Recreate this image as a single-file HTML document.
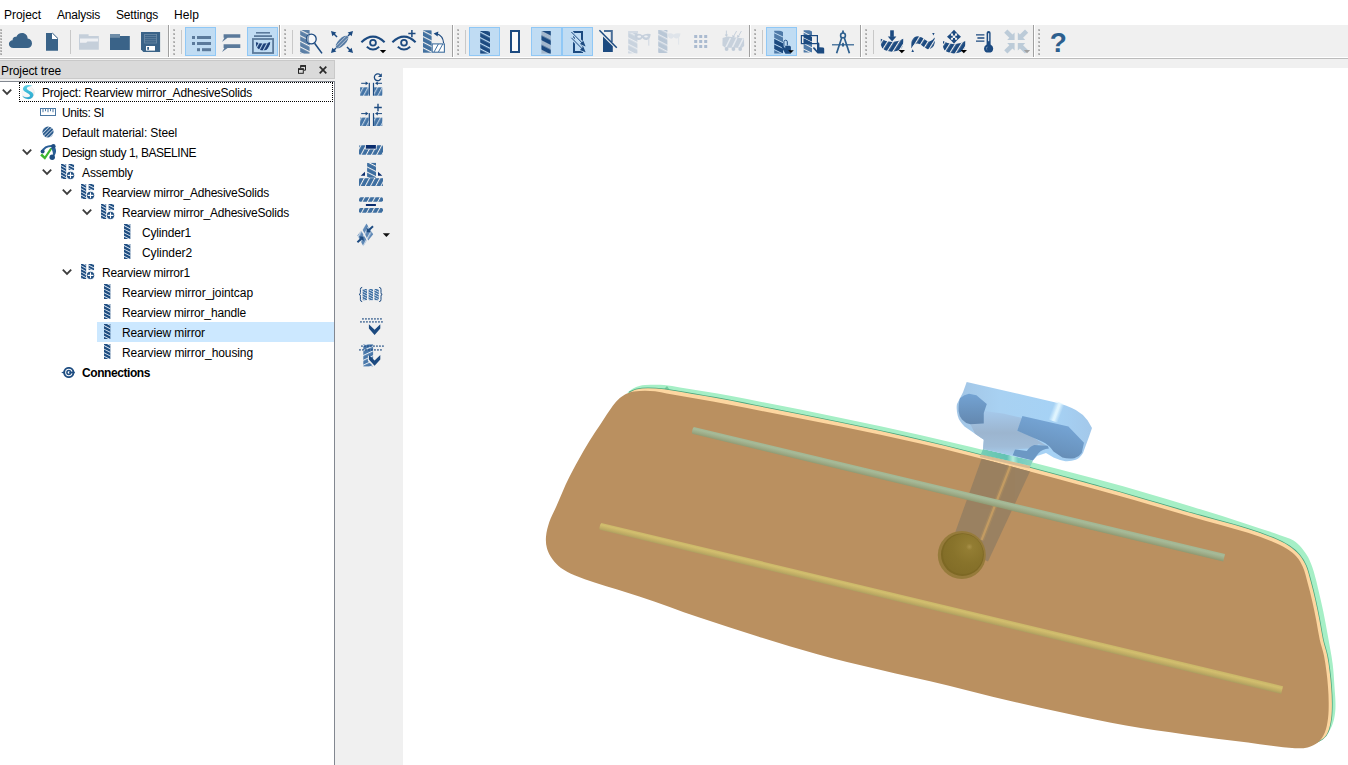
<!DOCTYPE html>
<html><head><meta charset="utf-8"><title>Project</title>
<style>
*{box-sizing:border-box;margin:0;padding:0}
html,body{width:1348px;height:765px;overflow:hidden;background:#f0f0f0;font-family:"Liberation Sans",sans-serif;font-size:12px;color:#000}
#app{position:relative;width:1348px;height:765px;overflow:hidden;background:#f0f0f0}
.abs{position:absolute}
#menubar{position:absolute;left:0;top:0;width:1348px;height:25px;background:#fff}
#menubar span{position:absolute;top:8px;line-height:14px;font-size:12px;white-space:nowrap}
#toolbar{position:absolute;left:0;top:25px;width:1348px;height:33px;background:#f0f0f0}
#tbline1{position:absolute;left:0;top:58px;width:1348px;height:1px;background:#bcbcbc}
#tbline0{position:absolute;left:0;top:57px;width:1348px;height:1px;background:#fff}
#docktitle{position:absolute;left:0;top:60px;width:335px;height:19px;background:#dadada;border:1px solid #c9c9c9;border-left:none}
#docktitle span{position:absolute;left:1px;top:3px;line-height:14px;white-space:nowrap}
#tree{position:absolute;left:0;top:81px;width:335px;height:684px;background:#fff;border-right:1px solid #828790}
.row{position:absolute;height:20px;line-height:22px;white-space:nowrap}
#sel{position:absolute;left:97px;top:241px;width:237px;height:20px;background:#cce8ff}
#focus{position:absolute;left:19px;top:1px;width:314px;height:20px;border:1px dotted #000}
#vtb{position:absolute;left:336px;top:59px;width:67px;height:706px;background:#f0f0f0}
#view{position:absolute;left:403px;top:68px;width:945px;height:697px;background:#fff}
</style></head><body><div id="app">
<div id="menubar"><span style="left:4px;letter-spacing:-0.051px">Project</span><span style="left:57px;letter-spacing:-0.211px">Analysis</span><span style="left:116px;letter-spacing:-0.170px">Settings</span><span style="left:174px;letter-spacing:0.077px">Help</span></div>
<div id="toolbar"><svg class="abs" style="left:0;top:0" width="1348" height="33" viewBox="0 25 1348 33">
<defs>
<pattern id="hA" width="5" height="5" patternUnits="userSpaceOnUse" patternTransform="rotate(27)"><rect width="5" height="5" fill="#41709f"/><rect width="5" height="1.1" fill="#f0f0f0"/></pattern>
<pattern id="hAs" width="5" height="5" patternUnits="userSpaceOnUse" patternTransform="rotate(27)"><rect width="5" height="5" fill="#5b7fa6"/><rect width="5" height="1.1" fill="#f0f0f0"/></pattern>
<pattern id="hAd" width="5" height="5" patternUnits="userSpaceOnUse" patternTransform="rotate(27)"><rect width="5" height="5" fill="#1c4a80"/><rect width="5" height="1.2" fill="#c0dcf3"/></pattern>
<pattern id="hAm" width="8.4" height="8.4" patternUnits="userSpaceOnUse" patternTransform="rotate(27)"><rect width="8.4" height="8.4" fill="#1c4a80"/><rect width="8.4" height="4.2" fill="#a3b7cc"/></pattern>
<pattern id="hAx" width="5.6" height="5.6" patternUnits="userSpaceOnUse" patternTransform="rotate(27)"><rect width="5.6" height="5.6" fill="#c9d3de"/><rect width="5.6" height="1.3" fill="#e9ecf0"/></pattern>
<pattern id="hAy" width="5.6" height="5.6" patternUnits="userSpaceOnUse" patternTransform="rotate(27)"><rect width="5.6" height="5.6" fill="#b9c7d6"/><rect width="5.6" height="1.3" fill="#e4e8ee"/></pattern>
<pattern id="hB" width="4.9" height="4.9" patternUnits="userSpaceOnUse" patternTransform="rotate(-58)"><rect width="4.9" height="4.9" fill="#1c4a80"/><rect width="4.9" height="1.15" fill="#f0f0f0"/></pattern>
<pattern id="hBl" width="3.6" height="3.6" patternUnits="userSpaceOnUse" patternTransform="rotate(-62)"><rect width="3.6" height="3.6" fill="#1c3f78"/><rect width="3.6" height="1.0" fill="#c0dcf3"/></pattern>
<pattern id="hC" width="3.2" height="3.2" patternUnits="userSpaceOnUse" patternTransform="rotate(-58)"><rect width="3.2" height="3.2" fill="#5b7a9b"/><rect width="3.2" height="0.9" fill="#f0f0f0"/></pattern>
<pattern id="hAm2" width="9" height="9" patternUnits="userSpaceOnUse" patternTransform="rotate(27)"><rect width="9" height="9" fill="#1c4a80"/><rect width="9" height="3.6" fill="#4a76a6"/><rect y="3.6" width="9" height="1" fill="#c0dcf3"/><rect y="8" width="9" height="1" fill="#c0dcf3"/></pattern>
<pattern id="hAm3" width="9" height="9" patternUnits="userSpaceOnUse" patternTransform="rotate(27)"><rect width="9" height="9" fill="#1c4a80"/><rect width="9" height="3.6" fill="#4a76a6"/><rect y="3.6" width="9" height="1" fill="#f0f0f0"/><rect y="8" width="9" height="1" fill="#f0f0f0"/></pattern>
</defs>
<rect x="0" y="29" width="2" height="2" fill="#bcbcbc"/><rect x="1" y="30" width="1" height="1" fill="#a4a4a4"/><rect x="0" y="32" width="2" height="2" fill="#bcbcbc"/><rect x="1" y="33" width="1" height="1" fill="#a4a4a4"/><rect x="0" y="35" width="2" height="2" fill="#bcbcbc"/><rect x="1" y="36" width="1" height="1" fill="#a4a4a4"/><rect x="0" y="38" width="2" height="2" fill="#bcbcbc"/><rect x="1" y="39" width="1" height="1" fill="#a4a4a4"/><rect x="0" y="41" width="2" height="2" fill="#bcbcbc"/><rect x="1" y="42" width="1" height="1" fill="#a4a4a4"/><rect x="0" y="44" width="2" height="2" fill="#bcbcbc"/><rect x="1" y="45" width="1" height="1" fill="#a4a4a4"/><rect x="0" y="47" width="2" height="2" fill="#bcbcbc"/><rect x="1" y="48" width="1" height="1" fill="#a4a4a4"/><rect x="0" y="50" width="2" height="2" fill="#bcbcbc"/><rect x="1" y="51" width="1" height="1" fill="#a4a4a4"/><rect x="0" y="53" width="2" height="2" fill="#bcbcbc"/><rect x="1" y="54" width="1" height="1" fill="#a4a4a4"/>
<path d="M13.5 48 C10.6 48 8.9 46.2 8.9 44 C8.9 41.8 10.6 40.4 12.6 40.2 C12.4 37.6 14.4 36.2 16.4 36.8 C17.2 34.4 19.4 32.9 22 32.9 C25.4 32.9 27.8 35.6 27.6 38.6 C30.2 38.8 32 40.8 32 43.4 C32 46 30 48 27.4 48 Z" fill="#3a6388"/>
<path d="M46 33 H52.4 L58 38.6 V50.7 H46 Z" fill="#3a6388"/><path d="M52 33 L58 39 H52 Z" fill="#ffffff"/><path d="M52.4 33 L58 38.6" stroke="#3a6388" stroke-width="0.8"/>
<rect x="70" y="30" width="1" height="24" fill="#c8c8c8"/>
<path d="M79 34.2 H88.6 V36 H98.8 V49.8 H79 Z" fill="#c5cfda"/><path d="M80 38.6 H98 V41.4 H87.4 L86.2 42.8 H80 Z" fill="#eef0f3"/>
<path d="M110 36 H129.8 V50 H110 Z" fill="#3a6388"/><path d="M110 34 H120 V37.8 H110 Z" fill="#6f8da8"/>
<path d="M141 32 H160.1 V52 H143.4 L141 49.6 Z" fill="#3a6388"/><rect x="144.6" y="34.4" width="12" height="8.6" fill="none" stroke="#6f8da8" stroke-width="0.8"/><path d="M144.6 36.6 H156.6 M144.6 38.7 H156.6 M144.6 40.8 H156.6" stroke="#6f8da8" stroke-width="0.7"/><rect x="146" y="46" width="9" height="4.6" fill="#fff"/><rect x="147.2" y="47" width="1.8" height="2.8" fill="#3a6388"/>
<rect x="168" y="25" width="1" height="33" fill="#a0a0a0"/><rect x="169" y="25" width="1" height="33" fill="#ffffff"/>
<rect x="173" y="29" width="2" height="2" fill="#bcbcbc"/><rect x="174" y="30" width="1" height="1" fill="#a4a4a4"/><rect x="173" y="33" width="2" height="2" fill="#bcbcbc"/><rect x="174" y="34" width="1" height="1" fill="#a4a4a4"/><rect x="173" y="37" width="2" height="2" fill="#bcbcbc"/><rect x="174" y="38" width="1" height="1" fill="#a4a4a4"/><rect x="173" y="41" width="2" height="2" fill="#bcbcbc"/><rect x="174" y="42" width="1" height="1" fill="#a4a4a4"/><rect x="173" y="45" width="2" height="2" fill="#bcbcbc"/><rect x="174" y="46" width="1" height="1" fill="#a4a4a4"/><rect x="173" y="49" width="2" height="2" fill="#bcbcbc"/><rect x="174" y="50" width="1" height="1" fill="#a4a4a4"/><rect x="173" y="53" width="2" height="2" fill="#bcbcbc"/><rect x="174" y="54" width="1" height="1" fill="#a4a4a4"/>
<rect x="181" y="30" width="1" height="24" fill="#c8c8c8"/>
<rect x="185.5" y="27.5" width="30" height="28" fill="#c0dcf3" stroke="#90c8f6" stroke-width="1"/>
<rect x="192" y="36" width="3" height="3" fill="#5b7a9b"/><rect x="197" y="36" width="14" height="3" fill="#5b7a9b"/>
<rect x="192" y="42" width="3" height="3" fill="#5b7a9b"/><rect x="197" y="42" width="14" height="3" fill="#5b7a9b"/>
<rect x="197" y="48.2" width="3" height="3" fill="#5b7a9b"/><rect x="202" y="48.2" width="9" height="3" fill="#5b7a9b"/>
<path d="M223.6 34.2 H240.3 V37.800000000000004 H227.6 L222 42.0 L224.4 37.800000000000004 H223.6 Z" fill="#5b7a9b"/>
<path d="M223.6 44.3 H240.3 V47.9 H227.6 L222 52.099999999999994 L224.4 47.9 H223.6 Z" fill="#5b7a9b"/>
<rect x="247.5" y="27.5" width="30" height="28" fill="#c0dcf3" stroke="#90c8f6" stroke-width="1"/>
<rect x="256" y="32" width="14" height="1.6" fill="#5b7a9b"/><rect x="254" y="35.2" width="18" height="1.8" fill="#5b7a9b"/><rect x="252.9" y="39" width="20.2" height="14" fill="none" stroke="#5b7a9b" stroke-width="1.8"/><path d="M255.8 42 Q263 45 270.2 42 Q270.4 50.4 263 50.6 Q255.6 50.4 255.8 42 Z" fill="url(#hBl)"/>
<rect x="279" y="25" width="1" height="33" fill="#a0a0a0"/><rect x="280" y="25" width="1" height="33" fill="#ffffff"/>
<rect x="284" y="29" width="2" height="2" fill="#bcbcbc"/><rect x="285" y="30" width="1" height="1" fill="#a4a4a4"/><rect x="284" y="33" width="2" height="2" fill="#bcbcbc"/><rect x="285" y="34" width="1" height="1" fill="#a4a4a4"/><rect x="284" y="37" width="2" height="2" fill="#bcbcbc"/><rect x="285" y="38" width="1" height="1" fill="#a4a4a4"/><rect x="284" y="41" width="2" height="2" fill="#bcbcbc"/><rect x="285" y="42" width="1" height="1" fill="#a4a4a4"/><rect x="284" y="45" width="2" height="2" fill="#bcbcbc"/><rect x="285" y="46" width="1" height="1" fill="#a4a4a4"/><rect x="284" y="49" width="2" height="2" fill="#bcbcbc"/><rect x="285" y="50" width="1" height="1" fill="#a4a4a4"/><rect x="284" y="53" width="2" height="2" fill="#bcbcbc"/><rect x="285" y="54" width="1" height="1" fill="#a4a4a4"/>
<rect x="292" y="30" width="1" height="24" fill="#c8c8c8"/>
<rect x="300.2" y="30" width="9.4" height="23.6" fill="url(#hAs)"/><circle cx="311.3" cy="39" r="4.9" fill="#f6f7f9" stroke="#1c4a80" stroke-width="1.3"/><path d="M309.6 34.8 A4.5 4.5 0 0 0 309.6 43.2 A12 12 0 0 1 309.6 34.8 Z" fill="#8aa1bb"/><path d="M314.6 43.2 L322 53.4" stroke="#1c4a80" stroke-width="1.6"/>
<g transform="translate(342,42)"><g transform="rotate(-45)"><ellipse cx="0" cy="0" rx="8.2" ry="3.6" fill="#587da6"/><path d="M-6.6 -1.25 H6.6 M-6.6 1.25 H6.6" stroke="#f0f0f0" stroke-width="0.6"/></g>
<g transform="rotate(45)"><path d="M7 0 H13" stroke="#1c4a80" stroke-width="1.5"/><path d="M15.6 0 L10.8 -2.8 V2.8 Z" fill="#1c4a80"/></g>
<g transform="rotate(135)"><path d="M8.4 0 H13" stroke="#1c4a80" stroke-width="1.5"/><path d="M15.6 0 L10.8 -2.8 V2.8 Z" fill="#1c4a80"/></g>
<g transform="rotate(225)"><path d="M7 0 H13" stroke="#1c4a80" stroke-width="1.5"/><path d="M15.6 0 L10.8 -2.8 V2.8 Z" fill="#1c4a80"/></g>
<g transform="rotate(315)"><path d="M8.4 0 H13" stroke="#1c4a80" stroke-width="1.5"/><path d="M15.6 0 L10.8 -2.8 V2.8 Z" fill="#1c4a80"/></g>
</g>
<path d="M361.4 42.2 Q373 31 384.6 42.2" fill="none" stroke="#1c4a80" stroke-width="2.1"/><circle cx="373" cy="42.8" r="2.9" fill="none" stroke="#1c4a80" stroke-width="1.8"/><path d="M366.8 46.8 Q373 52.4 379.2 46.8" fill="none" stroke="#1c4a80" stroke-width="1.9"/>
<path d="M379.8 50 H386.2 L383 53.2 Z" fill="#000"/>
<path d="M392.4 42.2 Q404 31 415.6 42.2" fill="none" stroke="#1c4a80" stroke-width="2.1"/><circle cx="404" cy="42.8" r="2.9" fill="none" stroke="#1c4a80" stroke-width="1.8"/><path d="M397.8 46.8 Q404 52.4 410.2 46.8" fill="none" stroke="#1c4a80" stroke-width="1.9"/>
<path d="M408.3 33.6 H415.5 M411.9 30 V37.2" stroke="#1c4a80" stroke-width="1.5"/>
<rect x="423" y="30.3" width="8.6" height="22.4" fill="url(#hA)"/><rect x="432.2" y="43.9" width="12.2" height="8.3" fill="#fff" stroke="#41709f" stroke-width="1.1"/><path d="M434 52 L438.4 44 M438.4 52 L442.8 44" stroke="#41709f" stroke-width="1"/><path d="M443.6 43 Q443 35.6 436.6 33.8" fill="none" stroke="#1c4a80" stroke-width="1.1"/><path d="M433.6 33.4 L438.4 31.4 L437.6 36.4 Z" fill="#1c4a80"/>
<rect x="452" y="25" width="1" height="33" fill="#a0a0a0"/><rect x="453" y="25" width="1" height="33" fill="#ffffff"/>
<rect x="457" y="29" width="2" height="2" fill="#bcbcbc"/><rect x="458" y="30" width="1" height="1" fill="#a4a4a4"/><rect x="457" y="33" width="2" height="2" fill="#bcbcbc"/><rect x="458" y="34" width="1" height="1" fill="#a4a4a4"/><rect x="457" y="37" width="2" height="2" fill="#bcbcbc"/><rect x="458" y="38" width="1" height="1" fill="#a4a4a4"/><rect x="457" y="41" width="2" height="2" fill="#bcbcbc"/><rect x="458" y="42" width="1" height="1" fill="#a4a4a4"/><rect x="457" y="45" width="2" height="2" fill="#bcbcbc"/><rect x="458" y="46" width="1" height="1" fill="#a4a4a4"/><rect x="457" y="49" width="2" height="2" fill="#bcbcbc"/><rect x="458" y="50" width="1" height="1" fill="#a4a4a4"/><rect x="457" y="53" width="2" height="2" fill="#bcbcbc"/><rect x="458" y="54" width="1" height="1" fill="#a4a4a4"/>
<rect x="465" y="30" width="1" height="24" fill="#c8c8c8"/>
<rect x="469.5" y="27.5" width="30" height="28" fill="#c0dcf3" stroke="#90c8f6" stroke-width="1"/>
<rect x="480.2" y="31" width="9.8" height="22.6" fill="url(#hAd)"/>
<rect x="511" y="31" width="8" height="21" fill="#fbfbfb" stroke="#1c4a80" stroke-width="2"/>
<rect x="531.5" y="27.5" width="30" height="28" fill="#c0dcf3" stroke="#90c8f6" stroke-width="1"/>
<rect x="541.4" y="31" width="9.4" height="22.6" fill="url(#hAm)"/>
<rect x="562.5" y="27.5" width="30" height="28" fill="#c0dcf3" stroke="#90c8f6" stroke-width="1"/>
<rect x="574" y="32" width="8" height="20" fill="none" stroke="#1c4a80" stroke-width="2"/>
<path d="M571.4 32 L584.6 45.4" stroke="#c0dcf3" stroke-width="3.2"/><path d="M586.6 47.4 L578.8 44.6 L583.8 39.6 Z" fill="#c0dcf3"/>
<path d="M571.4 37.8 L584.6 51.199999999999996" stroke="#c0dcf3" stroke-width="3.2"/><path d="M586.6 53.199999999999996 L578.8 50.4 L583.8 45.4 Z" fill="#c0dcf3"/>
<path d="M571.4 32 L583 43.8" stroke="#1c4a80" stroke-width="1"/><path d="M585.6 46.4 L579.9 44.1 L583.3 40.7 Z" fill="#1c4a80"/>
<path d="M571.4 37.8 L583 49.599999999999994" stroke="#1c4a80" stroke-width="1"/><path d="M585.6 52.199999999999996 L579.9 49.9 L583.3 46.5 Z" fill="#1c4a80"/>
<path d="M604 31 H611.8 V42" fill="none" stroke="#4a6e98" stroke-width="2"/><path d="M603 36.4 L612.8 46.2 V51.9 H603 Z" fill="#1c4a80"/><path d="M599.4 30.2 L616.8 47.8" stroke="#1c4a80" stroke-width="1.5"/>
<rect x="628.2" y="31" width="9.2" height="22.4" fill="url(#hAx)"/><path d="M628.2 31 H638 V33 H628.2 Z" fill="#d4dbe4"/>
<path d="M634.6 34.4 Q639 33 642.4 35.2 Q645.8 33 650.6 34 Q650.6 39 646.8 40 Q643.8 40.4 642.4 38 Q641 40.4 638.2 40 Q634.8 39.2 634.6 34.4 Z" fill="#c6d0dc"/><ellipse cx="639.2" cy="36.7" rx="1.9" ry="1.1" fill="#eef0f3"/><ellipse cx="646" cy="36.5" rx="1.9" ry="1.1" fill="#eef0f3"/><path d="M648.8 36 V45.6" stroke="#ccd5e0" stroke-width="0.9"/>
<rect x="658.2" y="30" width="9.2" height="23" fill="url(#hAy)"/>
<path d="M667.6 33.8 Q671 32.6 673.6 34.4 Q676.4 32.6 680.4 33.4 Q680.2 37.6 677 38.4 Q674.6 38.8 673.6 37 Q672.6 39 670.4 38.6 Q667.8 38 667.6 33.8 Z" fill="#dfe4ea"/><path d="M678.6 35 V44.6" stroke="#dfe4ea" stroke-width="0.9"/>
<rect x="694.2" y="35" width="3" height="3" fill="#abbbd0"/>
<rect x="694.2" y="40" width="3" height="3" fill="#abbbd0"/>
<rect x="694.2" y="45" width="3" height="3" fill="#abbbd0"/>
<rect x="699.2" y="35" width="3" height="3" fill="#abbbd0"/>
<rect x="699.2" y="40" width="3" height="3" fill="#abbbd0"/>
<rect x="699.2" y="45" width="3" height="3" fill="#abbbd0"/>
<rect x="704.2" y="35" width="3" height="3" fill="#abbbd0"/>
<rect x="704.2" y="40" width="3" height="3" fill="#abbbd0"/>
<rect x="704.2" y="45" width="3" height="3" fill="#abbbd0"/>
<path d="M722.6 38 L727.4 36.6 L744 38.6 L744.2 46 L742 47.8 H725.2 L722.4 45.6 Z" fill="#c7d1dc"/><path d="M725.8 47.6 L730.4 38 M732.2 47.6 L736.8 38 M738.6 47.6 L743.2 38.6" stroke="#e6eaef" stroke-width="1.5"/><circle cx="726.6" cy="49" r="1.9" fill="#c2cdd9"/><circle cx="733.4" cy="49" r="1.9" fill="#c2cdd9"/><circle cx="740.2" cy="49" r="1.9" fill="#c2cdd9"/><path d="M726.4 30.6 V36 M736.6 31 L733.6 36.4 M741.4 31 L738.4 36.4" stroke="#c2cdd9" stroke-width="0.9"/><path d="M724.8 34.6 H728 L726.4 37 Z M732.2 35 L735 36.4 L732.6 38 Z M737 35 L739.8 36.4 L737.4 38 Z" fill="#c2cdd9"/>
<rect x="749" y="25" width="1" height="33" fill="#a0a0a0"/><rect x="750" y="25" width="1" height="33" fill="#ffffff"/>
<rect x="754" y="29" width="2" height="2" fill="#bcbcbc"/><rect x="755" y="30" width="1" height="1" fill="#a4a4a4"/><rect x="754" y="33" width="2" height="2" fill="#bcbcbc"/><rect x="755" y="34" width="1" height="1" fill="#a4a4a4"/><rect x="754" y="37" width="2" height="2" fill="#bcbcbc"/><rect x="755" y="38" width="1" height="1" fill="#a4a4a4"/><rect x="754" y="41" width="2" height="2" fill="#bcbcbc"/><rect x="755" y="42" width="1" height="1" fill="#a4a4a4"/><rect x="754" y="45" width="2" height="2" fill="#bcbcbc"/><rect x="755" y="46" width="1" height="1" fill="#a4a4a4"/><rect x="754" y="49" width="2" height="2" fill="#bcbcbc"/><rect x="755" y="50" width="1" height="1" fill="#a4a4a4"/><rect x="754" y="53" width="2" height="2" fill="#bcbcbc"/><rect x="755" y="54" width="1" height="1" fill="#a4a4a4"/>
<rect x="762" y="30" width="1" height="24" fill="#c8c8c8"/>
<rect x="766.5" y="27.5" width="30" height="28" fill="#c0dcf3" stroke="#90c8f6" stroke-width="1"/>
<clipPath id="bc1"><rect x="774.1" y="30.8" width="8.899999999999977" height="22.599999999999998"/></clipPath><g clip-path="url(#bc1)"><path d="M774.1 27.60 L783 32.00 L783 36.60 L774.1 32.20 Z" fill="#4f7aa8"/><path d="M774.1 33.20 L783 37.60 L783 42.20 L774.1 37.80 Z" fill="#4f7aa8"/><path d="M774.1 38.80 L783 43.20 L783 47.80 L774.1 43.40 Z" fill="#1c4a80"/><path d="M774.1 44.40 L783 48.80 L783 53.40 L774.1 49.00 Z" fill="#1c4a80"/><path d="M774.1 50.00 L783 54.40 L783 59.00 L774.1 54.60 Z" fill="#4f7aa8"/></g>
<path d="M783.9 46.4 V41.8 Q783.9 40.2 785.6 40.2 Q787.3 40.2 787.3 41.8 V45.4" fill="none" stroke="#1c4a80" stroke-width="1"/><path d="M781.2 46.6 L783 45.6 L785.2 48.2 V45.8 H789.6 Q790.9 46 790.9 47.2 V53.8 H785.4 Z" fill="#1c4a80"/><path d="M788.2 50.2 H793.8 L791 53 Z" fill="#000"/>
<clipPath id="bc2"><rect x="803.4" y="30.2" width="8.600000000000023" height="22.400000000000002"/></clipPath><g clip-path="url(#bc2)"><path d="M803.4 27.00 L812 31.40 L812 36.00 L803.4 31.60 Z" fill="#4f7aa8"/><path d="M803.4 32.60 L812 37.00 L812 41.60 L803.4 37.20 Z" fill="#4f7aa8"/><path d="M803.4 38.20 L812 42.60 L812 47.20 L803.4 42.80 Z" fill="#4f7aa8"/><path d="M803.4 43.80 L812 48.20 L812 52.80 L803.4 48.40 Z" fill="#4f7aa8"/><path d="M803.4 49.40 L812 53.80 L812 58.40 L803.4 54.00 Z" fill="#4f7aa8"/></g>
<clipPath id="bc3"><rect x="803.4" y="35.6" width="8.600000000000023" height="8.0"/></clipPath><g clip-path="url(#bc3)"><path d="M803.4 27.00 L812 31.40 L812 36.00 L803.4 31.60 Z" fill="#1c4a80"/><path d="M803.4 32.60 L812 37.00 L812 41.60 L803.4 37.20 Z" fill="#1c4a80"/><path d="M803.4 38.20 L812 42.60 L812 47.20 L803.4 42.80 Z" fill="#1c4a80"/><path d="M803.4 43.80 L812 48.20 L812 52.80 L803.4 48.40 Z" fill="#1c4a80"/><path d="M803.4 49.40 L812 53.80 L812 58.40 L803.4 54.00 Z" fill="#1c4a80"/></g>
<rect x="801.4" y="35.6" width="16" height="8" fill="none" stroke="#1c4a80" stroke-width="1.2"/><g transform="translate(817,49.8)"><path d="M0 0.6 V-6 Q0 -7.2 1.2 -7.2 Q2.4 -7.2 2.4 -6 V-2.5 L6.2 -2.3 Q7.2 -2.1 7.2 -1 V3.8 H0.6 L-3.9 -1.3 Q-4.3 -2.3 -3.3 -2.5 Q-2.6 -2.6 -2.1 -2 Z" fill="#1c4a80"/></g>
<path d="M843 30.4 V33" stroke="#2d5f8e" stroke-width="1.8"/><circle cx="843" cy="35.4" r="2.4" fill="none" stroke="#2d5f8e" stroke-width="1.6"/><path d="M841.8 37.6 L836.6 53.2 M844.2 37.6 L849.4 53.2" stroke="#2d5f8e" stroke-width="1.7"/><path d="M832 44.8 H854" stroke="#2d5f8e" stroke-width="1.2"/><rect x="842" y="42.8" width="2" height="4" rx="1" fill="#2d5f8e"/>
<rect x="860" y="25" width="1" height="33" fill="#a0a0a0"/><rect x="861" y="25" width="1" height="33" fill="#ffffff"/>
<rect x="865" y="29" width="2" height="2" fill="#bcbcbc"/><rect x="866" y="30" width="1" height="1" fill="#a4a4a4"/><rect x="865" y="33" width="2" height="2" fill="#bcbcbc"/><rect x="866" y="34" width="1" height="1" fill="#a4a4a4"/><rect x="865" y="37" width="2" height="2" fill="#bcbcbc"/><rect x="866" y="38" width="1" height="1" fill="#a4a4a4"/><rect x="865" y="41" width="2" height="2" fill="#bcbcbc"/><rect x="866" y="42" width="1" height="1" fill="#a4a4a4"/><rect x="865" y="45" width="2" height="2" fill="#bcbcbc"/><rect x="866" y="46" width="1" height="1" fill="#a4a4a4"/><rect x="865" y="49" width="2" height="2" fill="#bcbcbc"/><rect x="866" y="50" width="1" height="1" fill="#a4a4a4"/><rect x="865" y="53" width="2" height="2" fill="#bcbcbc"/><rect x="866" y="54" width="1" height="1" fill="#a4a4a4"/>
<rect x="873" y="30" width="1" height="24" fill="#c8c8c8"/>
<path d="M880.8 38.8 Q892.0 45.4 903.2 38.8 L903.2 44.8 Q902.0 51.199999999999996 892.0 51.8 Q882.0 51.199999999999996 880.8 44.8 Z" fill="url(#hB)"/>
<rect x="890.2" y="30.3" width="3.6" height="6.6" fill="#1c4a80"/><path d="M887.8 36.6 H896.4 L892.1 41.4 Z" fill="#1c4a80"/><path d="M898.6 50 H905 L901.8 53.2 Z" fill="#000"/>
<path d="M911.4 40.4 Q914 36.4 918 36.3 Q922 36.6 925.9 40.2 Q928 41.8 930 41.3 Q932.6 40.4 934.6 37.4 L934.9 42.4 Q934 46.2 932.3 47.6 Q929.6 49.8 927.3 49.1 Q924 47.4 921.6 45.2 Q918.6 43 915.9 43.8 Q913 45 911.3 48.4 Z" fill="url(#hB)"/><path d="M932.2 33.1 H934.6 L933.4 35.4 Z M912.7 49.2 L914 52 H911.4 Z" fill="#1c4a80"/>
<path d="M943 41 Q954.1 47.6 965.2 41 L965.2 47 Q964.0 52.8 954.1 53.4 Q944.2 52.8 943 47 Z" fill="url(#hB)"/>
<g transform="translate(954,36.7)"><g transform="rotate(0)"><path d="M0 -7 L-3.5 -3.1 H-1 V-1.3 H1 V-3.1 H3.5 Z" fill="#1c4a80"/></g><g transform="rotate(90)"><path d="M0 -7 L-3.5 -3.1 H-1 V-1.3 H1 V-3.1 H3.5 Z" fill="#1c4a80"/></g><g transform="rotate(180)"><path d="M0 -7 L-3.5 -3.1 H-1 V-1.3 H1 V-3.1 H3.5 Z" fill="#1c4a80"/></g><g transform="rotate(270)"><path d="M0 -7 L-3.5 -3.1 H-1 V-1.3 H1 V-3.1 H3.5 Z" fill="#1c4a80"/></g></g><path d="M960.6 50 H967 L963.8 53.2 Z" fill="#000"/>
<path d="M986.6 33 Q986.6 31 988.6 31 Q990.6 31 990.6 33 V44.4 Q993.2 45.8 993.2 48.4 Q993.2 52.6 988.6 52.6 Q984 52.6 984 48.4 Q984 45.8 986.6 44.4 Z" fill="#1c4a80"/><rect x="988.1" y="33.2" width="1.1" height="8" fill="#e6edf5"/><path d="M987.6 46.4 A2.4 2.4 0 0 0 987.6 50.6 A3.2 3.2 0 0 1 987.6 46.4 Z" fill="#e6edf5"/><path d="M976 34.8 H984.4 M977.4 38 H984.4 M976 41.2 H984.4" stroke="#1c4a80" stroke-width="1.3"/>
<g transform="translate(1016.2,41.5) scale(-1,-1)"><path d="M1.6 1.6 H9 L6.9 3.7 L12 8.8 L8.8 12 L3.7 6.9 L1.6 9 Z" fill="#bccbd8"/></g>
<g transform="translate(1016.2,41.5) scale(1,-1)"><path d="M1.6 1.6 H9 L6.9 3.7 L12 8.8 L8.8 12 L3.7 6.9 L1.6 9 Z" fill="#bccbd8"/></g>
<g transform="translate(1016.2,41.5) scale(-1,1)"><path d="M1.6 1.6 H9 L6.9 3.7 L12 8.8 L8.8 12 L3.7 6.9 L1.6 9 Z" fill="#bccbd8"/></g>
<g transform="translate(1016.2,41.5) scale(1,1)"><path d="M1.6 1.6 H9 L6.9 3.7 L12 8.8 L8.8 12 L3.7 6.9 L1.6 9 Z" fill="#bccbd8"/></g>
<path d="M1023.8 50 H1030.2 L1027 53.2 Z" fill="#a0a0a0"/>
<rect x="1033" y="25" width="1" height="33" fill="#a0a0a0"/><rect x="1034" y="25" width="1" height="33" fill="#ffffff"/>
<rect x="1038" y="29" width="2" height="2" fill="#bcbcbc"/><rect x="1039" y="30" width="1" height="1" fill="#a4a4a4"/><rect x="1038" y="33" width="2" height="2" fill="#bcbcbc"/><rect x="1039" y="34" width="1" height="1" fill="#a4a4a4"/><rect x="1038" y="37" width="2" height="2" fill="#bcbcbc"/><rect x="1039" y="38" width="1" height="1" fill="#a4a4a4"/><rect x="1038" y="41" width="2" height="2" fill="#bcbcbc"/><rect x="1039" y="42" width="1" height="1" fill="#a4a4a4"/><rect x="1038" y="45" width="2" height="2" fill="#bcbcbc"/><rect x="1039" y="46" width="1" height="1" fill="#a4a4a4"/><rect x="1038" y="49" width="2" height="2" fill="#bcbcbc"/><rect x="1039" y="50" width="1" height="1" fill="#a4a4a4"/><rect x="1038" y="53" width="2" height="2" fill="#bcbcbc"/><rect x="1039" y="54" width="1" height="1" fill="#a4a4a4"/>
<text x="1058.2" y="51.6" font-family="Liberation Sans, sans-serif" font-weight="bold" font-size="28" fill="#2d5f8e" text-anchor="middle">?</text>
</svg></div>
<div id="tbline0"></div><div id="tbline1"></div>
<div id="docktitle"><span style="letter-spacing:-0.113px">Project tree</span><svg class="abs" style="left:297px;top:4px" width="10" height="10" viewBox="297 65 10 10"><path d="M300.7 66.1 H305.5 V70.2 H304 M300.7 66.1 V68" fill="none" stroke="#222" stroke-width="1"/><rect x="300.2" y="65.1" width="5.8" height="1.6" fill="#222"/><rect x="298.5" y="69.2" width="4.8" height="4.1" fill="none" stroke="#222" stroke-width="1"/><rect x="298" y="68.2" width="5.8" height="1.6" fill="#222"/></svg>
<svg class="abs" style="left:318px;top:4px" width="10" height="10" viewBox="318 65 10 10"><path d="M319.7 66.7 L326.3 73.3 M326.3 66.7 L319.7 73.3" stroke="#2a2a2a" stroke-width="1.7"/></svg></div>
<div id="tree"><div class="abs" style="left:0;top:0;width:335px;height:1px;background:#828790"></div>
<div id="sel"></div><div id="focus"></div>
<svg class="abs" style="left:0.7999999999999998px;top:5.5px" width="12" height="10" viewBox="0 0 12 10"><path d="M1.8 2.6 L6 6.9 L10.2 2.6" fill="none" stroke="#3c3c3c" stroke-width="1.8"/></svg>
<svg class="abs" style="left:21px;top:3.5px" width="14" height="15" viewBox="0 0 14 15"><defs><radialGradient id="sg" cx="40%" cy="35%" r="70%"><stop offset="0" stop-color="#ffffff"/><stop offset="0.7" stop-color="#f3f3f3"/><stop offset="1" stop-color="#d4d4d4"/></radialGradient>
<linearGradient id="sc" gradientUnits="userSpaceOnUse" x1="0" y1="0" x2="0" y2="15"><stop offset="0" stop-color="#5fd0e6"/><stop offset="0.5" stop-color="#39b8d8"/><stop offset="1" stop-color="#2fa6cf"/></linearGradient></defs>
<circle cx="7" cy="7.5" r="6.6" fill="url(#sg)"/>
<path d="M11.6 1 C8 -0.8 2.6 -0.2 2 3.4 C1.6 6 5 7.2 7 8.4 C9 9.6 9.6 10.6 8.6 11.6 C7.4 12.8 4 12.6 1.2 10.8 C3 13.8 7 15 10 13.5 C12.8 12 13 9.2 11.2 7.6 C9.6 6.2 6.4 5.4 5.8 3.8 C5.4 2.2 7.8 1 11.6 1 Z" fill="url(#sc)"/></svg>
<div class="row" style="left:42px;top:1px;letter-spacing:-0.190px;">Project: Rearview mirror_AdhesiveSolids</div>
<svg class="abs" style="left:40px;top:27px" width="16" height="8" viewBox="0 0 16 8"><rect x="0.5" y="0.5" width="15" height="7" fill="#fff" stroke="#4b78a3" stroke-width="1"/><rect x="2.5" y="1" width="1" height="3.2" fill="#4b78a3"/><rect x="5.0" y="1" width="1" height="2.2" fill="#4b78a3"/><rect x="7.5" y="1" width="1" height="3.2" fill="#4b78a3"/><rect x="10.0" y="1" width="1" height="2.2" fill="#4b78a3"/><rect x="12.5" y="1" width="1" height="3.2" fill="#4b78a3"/></svg>
<div class="row" style="left:62px;top:21px;letter-spacing:-0.373px;">Units: SI</div>
<svg class="abs" style="left:42px;top:45px" width="12" height="12" viewBox="0 0 12 12"><defs><pattern id="hm" width="2.6" height="2.6" patternUnits="userSpaceOnUse" patternTransform="rotate(-45)"><rect width="2.6" height="2.6" fill="#2a5a8c"/><rect width="2.6" height="0.75" fill="#cfdcea"/></pattern></defs><circle cx="6" cy="6" r="5.6" fill="url(#hm)"/></svg>
<div class="row" style="left:62px;top:41px;letter-spacing:-0.133px;">Default material: Steel</div>
<svg class="abs" style="left:20.8px;top:65.5px" width="12" height="10" viewBox="0 0 12 10"><path d="M1.8 2.6 L6 6.9 L10.2 2.6" fill="none" stroke="#3c3c3c" stroke-width="1.8"/></svg>
<svg class="abs" style="left:40px;top:63px" width="16" height="16" viewBox="0 0 16 16"><path d="M2.6 7.8 C3 4.4 7 1.4 13 2" fill="none" stroke="#2a5f96" stroke-width="2"/>
<path d="M13.6 1.8 C17 4.6 17 10.4 12.6 13.6 C13.4 10.4 13 6 10.6 4.4 Z" fill="#2a5f96"/>
<circle cx="13.4" cy="2.2" r="2.2" fill="#1f4e82"/><circle cx="2.6" cy="7.6" r="2" fill="#1f4e82"/><circle cx="12.2" cy="13.2" r="2.7" fill="#1f4e82"/>
<path d="M0.2 11.6 L2 9.6 L4.8 12.2 L10.4 3.8 L11.8 5.4 L5 15.8 Z" fill="#3cb62e"/></svg>
<div class="row" style="left:62px;top:61px;letter-spacing:-0.448px;">Design study 1, BASELINE</div>
<svg class="abs" style="left:40.8px;top:85.5px" width="12" height="10" viewBox="0 0 12 10"><path d="M1.8 2.6 L6 6.9 L10.2 2.6" fill="none" stroke="#3c3c3c" stroke-width="1.8"/></svg>
<svg class="abs" style="left:61px;top:83px" width="14" height="16" viewBox="0 0 14 16"><clipPath id="ca1"><rect x="0" y="0" width="5.4" height="15"/></clipPath><g clip-path="url(#ca1)"><rect x="0" y="0" width="5.4" height="15" fill="#1f4e82"/><path d="M0 -8.10 L5.4 -5.20 L5.4 -4.30 L0 -7.20 Z" fill="#e9f0f8"/><path d="M0 -5.00 L5.4 -2.10 L5.4 -1.20 L0 -4.10 Z" fill="#e9f0f8"/><path d="M0 -1.90 L5.4 1.00 L5.4 1.90 L0 -1.00 Z" fill="#e9f0f8"/><path d="M0 1.20 L5.4 4.10 L5.4 5.00 L0 2.10 Z" fill="#e9f0f8"/><path d="M0 4.30 L5.4 7.20 L5.4 8.10 L0 5.20 Z" fill="#e9f0f8"/><path d="M0 7.40 L5.4 10.30 L5.4 11.20 L0 8.30 Z" fill="#e9f0f8"/><path d="M0 10.50 L5.4 13.40 L5.4 14.30 L0 11.40 Z" fill="#e9f0f8"/><path d="M0 13.60 L5.4 16.50 L5.4 17.40 L0 14.50 Z" fill="#e9f0f8"/></g><clipPath id="ca2"><rect x="7.4" y="0" width="5.8" height="6.3"/></clipPath><g clip-path="url(#ca2)"><rect x="7.4" y="0" width="5.8" height="6.3" fill="#1f4e82"/><path d="M7.4 -8.70 L13.2 -5.80 L13.2 -4.90 L7.4 -7.80 Z" fill="#e9f0f8"/><path d="M7.4 -5.60 L13.2 -2.70 L13.2 -1.80 L7.4 -4.70 Z" fill="#e9f0f8"/><path d="M7.4 -2.50 L13.2 0.40 L13.2 1.30 L7.4 -1.60 Z" fill="#e9f0f8"/><path d="M7.4 0.60 L13.2 3.50 L13.2 4.40 L7.4 1.50 Z" fill="#e9f0f8"/><path d="M7.4 3.70 L13.2 6.60 L13.2 7.50 L7.4 4.60 Z" fill="#e9f0f8"/></g><circle cx="9.5" cy="11.4" r="4.2" fill="#1f4e82" stroke="#fff" stroke-width="0.9"/><path d="M6.6 11.4 H12.4 M9.5 8.5 V14.3" stroke="#fff" stroke-width="1.1"/></svg>
<div class="row" style="left:82px;top:81px;letter-spacing:-0.128px;">Assembly</div>
<svg class="abs" style="left:60.8px;top:105.5px" width="12" height="10" viewBox="0 0 12 10"><path d="M1.8 2.6 L6 6.9 L10.2 2.6" fill="none" stroke="#3c3c3c" stroke-width="1.8"/></svg>
<svg class="abs" style="left:81px;top:103px" width="14" height="16" viewBox="0 0 14 16"><clipPath id="ca3"><rect x="0" y="0" width="5.4" height="15"/></clipPath><g clip-path="url(#ca3)"><rect x="0" y="0" width="5.4" height="15" fill="#1f4e82"/><path d="M0 -8.10 L5.4 -5.20 L5.4 -4.30 L0 -7.20 Z" fill="#e9f0f8"/><path d="M0 -5.00 L5.4 -2.10 L5.4 -1.20 L0 -4.10 Z" fill="#e9f0f8"/><path d="M0 -1.90 L5.4 1.00 L5.4 1.90 L0 -1.00 Z" fill="#e9f0f8"/><path d="M0 1.20 L5.4 4.10 L5.4 5.00 L0 2.10 Z" fill="#e9f0f8"/><path d="M0 4.30 L5.4 7.20 L5.4 8.10 L0 5.20 Z" fill="#e9f0f8"/><path d="M0 7.40 L5.4 10.30 L5.4 11.20 L0 8.30 Z" fill="#e9f0f8"/><path d="M0 10.50 L5.4 13.40 L5.4 14.30 L0 11.40 Z" fill="#e9f0f8"/><path d="M0 13.60 L5.4 16.50 L5.4 17.40 L0 14.50 Z" fill="#e9f0f8"/></g><clipPath id="ca4"><rect x="7.4" y="0" width="5.8" height="6.3"/></clipPath><g clip-path="url(#ca4)"><rect x="7.4" y="0" width="5.8" height="6.3" fill="#1f4e82"/><path d="M7.4 -8.70 L13.2 -5.80 L13.2 -4.90 L7.4 -7.80 Z" fill="#e9f0f8"/><path d="M7.4 -5.60 L13.2 -2.70 L13.2 -1.80 L7.4 -4.70 Z" fill="#e9f0f8"/><path d="M7.4 -2.50 L13.2 0.40 L13.2 1.30 L7.4 -1.60 Z" fill="#e9f0f8"/><path d="M7.4 0.60 L13.2 3.50 L13.2 4.40 L7.4 1.50 Z" fill="#e9f0f8"/><path d="M7.4 3.70 L13.2 6.60 L13.2 7.50 L7.4 4.60 Z" fill="#e9f0f8"/></g><circle cx="9.5" cy="11.4" r="4.2" fill="#1f4e82" stroke="#fff" stroke-width="0.9"/><path d="M6.6 11.4 H12.4 M9.5 8.5 V14.3" stroke="#fff" stroke-width="1.1"/></svg>
<div class="row" style="left:102px;top:101px;letter-spacing:-0.214px;">Rearview mirror_AdhesiveSolids</div>
<svg class="abs" style="left:80.8px;top:125.5px" width="12" height="10" viewBox="0 0 12 10"><path d="M1.8 2.6 L6 6.9 L10.2 2.6" fill="none" stroke="#3c3c3c" stroke-width="1.8"/></svg>
<svg class="abs" style="left:101px;top:123px" width="14" height="16" viewBox="0 0 14 16"><clipPath id="ca5"><rect x="0" y="0" width="5.4" height="15"/></clipPath><g clip-path="url(#ca5)"><rect x="0" y="0" width="5.4" height="15" fill="#1f4e82"/><path d="M0 -8.10 L5.4 -5.20 L5.4 -4.30 L0 -7.20 Z" fill="#e9f0f8"/><path d="M0 -5.00 L5.4 -2.10 L5.4 -1.20 L0 -4.10 Z" fill="#e9f0f8"/><path d="M0 -1.90 L5.4 1.00 L5.4 1.90 L0 -1.00 Z" fill="#e9f0f8"/><path d="M0 1.20 L5.4 4.10 L5.4 5.00 L0 2.10 Z" fill="#e9f0f8"/><path d="M0 4.30 L5.4 7.20 L5.4 8.10 L0 5.20 Z" fill="#e9f0f8"/><path d="M0 7.40 L5.4 10.30 L5.4 11.20 L0 8.30 Z" fill="#e9f0f8"/><path d="M0 10.50 L5.4 13.40 L5.4 14.30 L0 11.40 Z" fill="#e9f0f8"/><path d="M0 13.60 L5.4 16.50 L5.4 17.40 L0 14.50 Z" fill="#e9f0f8"/></g><clipPath id="ca6"><rect x="7.4" y="0" width="5.8" height="6.3"/></clipPath><g clip-path="url(#ca6)"><rect x="7.4" y="0" width="5.8" height="6.3" fill="#1f4e82"/><path d="M7.4 -8.70 L13.2 -5.80 L13.2 -4.90 L7.4 -7.80 Z" fill="#e9f0f8"/><path d="M7.4 -5.60 L13.2 -2.70 L13.2 -1.80 L7.4 -4.70 Z" fill="#e9f0f8"/><path d="M7.4 -2.50 L13.2 0.40 L13.2 1.30 L7.4 -1.60 Z" fill="#e9f0f8"/><path d="M7.4 0.60 L13.2 3.50 L13.2 4.40 L7.4 1.50 Z" fill="#e9f0f8"/><path d="M7.4 3.70 L13.2 6.60 L13.2 7.50 L7.4 4.60 Z" fill="#e9f0f8"/></g><circle cx="9.5" cy="11.4" r="4.2" fill="#1f4e82" stroke="#fff" stroke-width="0.9"/><path d="M6.6 11.4 H12.4 M9.5 8.5 V14.3" stroke="#fff" stroke-width="1.1"/></svg>
<div class="row" style="left:122px;top:121px;letter-spacing:-0.214px;">Rearview mirror_AdhesiveSolids</div>
<svg class="abs" style="left:124.0px;top:143px" width="7" height="15" viewBox="0 0 7 15"><clipPath id="cp7"><rect x="0" y="0" width="6.6" height="15"/></clipPath><g clip-path="url(#cp7)"><rect x="0" y="0" width="6.6" height="15" fill="#1f4e82"/><path d="M0 -9.61 L6.6 -6.21 L6.6 -5.26 L0 -8.66 Z" fill="#e9f0f8"/><path d="M0 -6.04 L6.6 -2.64 L6.6 -1.69 L0 -5.09 Z" fill="#e9f0f8"/><path d="M0 -2.47 L6.6 0.93 L6.6 1.88 L0 -1.52 Z" fill="#e9f0f8"/><path d="M0 1.10 L6.6 4.50 L6.6 5.45 L0 2.05 Z" fill="#e9f0f8"/><path d="M0 4.67 L6.6 8.07 L6.6 9.02 L0 5.62 Z" fill="#e9f0f8"/><path d="M0 8.24 L6.6 11.64 L6.6 12.59 L0 9.19 Z" fill="#e9f0f8"/><path d="M0 11.81 L6.6 15.21 L6.6 16.16 L0 12.76 Z" fill="#e9f0f8"/></g></svg>
<div class="row" style="left:142px;top:141px;letter-spacing:-0.189px;">Cylinder1</div>
<svg class="abs" style="left:124.0px;top:163px" width="7" height="15" viewBox="0 0 7 15"><clipPath id="cp8"><rect x="0" y="0" width="6.6" height="15"/></clipPath><g clip-path="url(#cp8)"><rect x="0" y="0" width="6.6" height="15" fill="#1f4e82"/><path d="M0 -9.61 L6.6 -6.21 L6.6 -5.26 L0 -8.66 Z" fill="#e9f0f8"/><path d="M0 -6.04 L6.6 -2.64 L6.6 -1.69 L0 -5.09 Z" fill="#e9f0f8"/><path d="M0 -2.47 L6.6 0.93 L6.6 1.88 L0 -1.52 Z" fill="#e9f0f8"/><path d="M0 1.10 L6.6 4.50 L6.6 5.45 L0 2.05 Z" fill="#e9f0f8"/><path d="M0 4.67 L6.6 8.07 L6.6 9.02 L0 5.62 Z" fill="#e9f0f8"/><path d="M0 8.24 L6.6 11.64 L6.6 12.59 L0 9.19 Z" fill="#e9f0f8"/><path d="M0 11.81 L6.6 15.21 L6.6 16.16 L0 12.76 Z" fill="#e9f0f8"/></g></svg>
<div class="row" style="left:142px;top:161px;letter-spacing:-0.078px;">Cylinder2</div>
<svg class="abs" style="left:60.8px;top:185.5px" width="12" height="10" viewBox="0 0 12 10"><path d="M1.8 2.6 L6 6.9 L10.2 2.6" fill="none" stroke="#3c3c3c" stroke-width="1.8"/></svg>
<svg class="abs" style="left:81px;top:183px" width="14" height="16" viewBox="0 0 14 16"><clipPath id="ca9"><rect x="0" y="0" width="5.4" height="15"/></clipPath><g clip-path="url(#ca9)"><rect x="0" y="0" width="5.4" height="15" fill="#1f4e82"/><path d="M0 -8.10 L5.4 -5.20 L5.4 -4.30 L0 -7.20 Z" fill="#e9f0f8"/><path d="M0 -5.00 L5.4 -2.10 L5.4 -1.20 L0 -4.10 Z" fill="#e9f0f8"/><path d="M0 -1.90 L5.4 1.00 L5.4 1.90 L0 -1.00 Z" fill="#e9f0f8"/><path d="M0 1.20 L5.4 4.10 L5.4 5.00 L0 2.10 Z" fill="#e9f0f8"/><path d="M0 4.30 L5.4 7.20 L5.4 8.10 L0 5.20 Z" fill="#e9f0f8"/><path d="M0 7.40 L5.4 10.30 L5.4 11.20 L0 8.30 Z" fill="#e9f0f8"/><path d="M0 10.50 L5.4 13.40 L5.4 14.30 L0 11.40 Z" fill="#e9f0f8"/><path d="M0 13.60 L5.4 16.50 L5.4 17.40 L0 14.50 Z" fill="#e9f0f8"/></g><clipPath id="ca10"><rect x="7.4" y="0" width="5.8" height="6.3"/></clipPath><g clip-path="url(#ca10)"><rect x="7.4" y="0" width="5.8" height="6.3" fill="#1f4e82"/><path d="M7.4 -8.70 L13.2 -5.80 L13.2 -4.90 L7.4 -7.80 Z" fill="#e9f0f8"/><path d="M7.4 -5.60 L13.2 -2.70 L13.2 -1.80 L7.4 -4.70 Z" fill="#e9f0f8"/><path d="M7.4 -2.50 L13.2 0.40 L13.2 1.30 L7.4 -1.60 Z" fill="#e9f0f8"/><path d="M7.4 0.60 L13.2 3.50 L13.2 4.40 L7.4 1.50 Z" fill="#e9f0f8"/><path d="M7.4 3.70 L13.2 6.60 L13.2 7.50 L7.4 4.60 Z" fill="#e9f0f8"/></g><circle cx="9.5" cy="11.4" r="4.2" fill="#1f4e82" stroke="#fff" stroke-width="0.9"/><path d="M6.6 11.4 H12.4 M9.5 8.5 V14.3" stroke="#fff" stroke-width="1.1"/></svg>
<div class="row" style="left:102px;top:181px;letter-spacing:-0.210px;">Rearview mirror1</div>
<svg class="abs" style="left:104.0px;top:203px" width="7" height="15" viewBox="0 0 7 15"><clipPath id="cp11"><rect x="0" y="0" width="6.6" height="15"/></clipPath><g clip-path="url(#cp11)"><rect x="0" y="0" width="6.6" height="15" fill="#1f4e82"/><path d="M0 -9.61 L6.6 -6.21 L6.6 -5.26 L0 -8.66 Z" fill="#e9f0f8"/><path d="M0 -6.04 L6.6 -2.64 L6.6 -1.69 L0 -5.09 Z" fill="#e9f0f8"/><path d="M0 -2.47 L6.6 0.93 L6.6 1.88 L0 -1.52 Z" fill="#e9f0f8"/><path d="M0 1.10 L6.6 4.50 L6.6 5.45 L0 2.05 Z" fill="#e9f0f8"/><path d="M0 4.67 L6.6 8.07 L6.6 9.02 L0 5.62 Z" fill="#e9f0f8"/><path d="M0 8.24 L6.6 11.64 L6.6 12.59 L0 9.19 Z" fill="#e9f0f8"/><path d="M0 11.81 L6.6 15.21 L6.6 16.16 L0 12.76 Z" fill="#e9f0f8"/></g></svg>
<div class="row" style="left:122px;top:201px;letter-spacing:-0.072px;">Rearview mirror_jointcap</div>
<svg class="abs" style="left:104.0px;top:223px" width="7" height="15" viewBox="0 0 7 15"><clipPath id="cp12"><rect x="0" y="0" width="6.6" height="15"/></clipPath><g clip-path="url(#cp12)"><rect x="0" y="0" width="6.6" height="15" fill="#1f4e82"/><path d="M0 -9.61 L6.6 -6.21 L6.6 -5.26 L0 -8.66 Z" fill="#e9f0f8"/><path d="M0 -6.04 L6.6 -2.64 L6.6 -1.69 L0 -5.09 Z" fill="#e9f0f8"/><path d="M0 -2.47 L6.6 0.93 L6.6 1.88 L0 -1.52 Z" fill="#e9f0f8"/><path d="M0 1.10 L6.6 4.50 L6.6 5.45 L0 2.05 Z" fill="#e9f0f8"/><path d="M0 4.67 L6.6 8.07 L6.6 9.02 L0 5.62 Z" fill="#e9f0f8"/><path d="M0 8.24 L6.6 11.64 L6.6 12.59 L0 9.19 Z" fill="#e9f0f8"/><path d="M0 11.81 L6.6 15.21 L6.6 16.16 L0 12.76 Z" fill="#e9f0f8"/></g></svg>
<div class="row" style="left:122px;top:221px;letter-spacing:-0.154px;">Rearview mirror_handle</div>
<svg class="abs" style="left:104.0px;top:243px" width="7" height="15" viewBox="0 0 7 15"><clipPath id="cp13"><rect x="0" y="0" width="6.6" height="15"/></clipPath><g clip-path="url(#cp13)"><rect x="0" y="0" width="6.6" height="15" fill="#1f4e82"/><path d="M0 -9.61 L6.6 -6.21 L6.6 -5.26 L0 -8.66 Z" fill="#e9f0f8"/><path d="M0 -6.04 L6.6 -2.64 L6.6 -1.69 L0 -5.09 Z" fill="#e9f0f8"/><path d="M0 -2.47 L6.6 0.93 L6.6 1.88 L0 -1.52 Z" fill="#e9f0f8"/><path d="M0 1.10 L6.6 4.50 L6.6 5.45 L0 2.05 Z" fill="#e9f0f8"/><path d="M0 4.67 L6.6 8.07 L6.6 9.02 L0 5.62 Z" fill="#e9f0f8"/><path d="M0 8.24 L6.6 11.64 L6.6 12.59 L0 9.19 Z" fill="#e9f0f8"/><path d="M0 11.81 L6.6 15.21 L6.6 16.16 L0 12.76 Z" fill="#e9f0f8"/></g></svg>
<div class="row" style="left:122px;top:241px;letter-spacing:-0.113px;">Rearview mirror</div>
<svg class="abs" style="left:104.0px;top:263px" width="7" height="15" viewBox="0 0 7 15"><clipPath id="cp14"><rect x="0" y="0" width="6.6" height="15"/></clipPath><g clip-path="url(#cp14)"><rect x="0" y="0" width="6.6" height="15" fill="#1f4e82"/><path d="M0 -9.61 L6.6 -6.21 L6.6 -5.26 L0 -8.66 Z" fill="#e9f0f8"/><path d="M0 -6.04 L6.6 -2.64 L6.6 -1.69 L0 -5.09 Z" fill="#e9f0f8"/><path d="M0 -2.47 L6.6 0.93 L6.6 1.88 L0 -1.52 Z" fill="#e9f0f8"/><path d="M0 1.10 L6.6 4.50 L6.6 5.45 L0 2.05 Z" fill="#e9f0f8"/><path d="M0 4.67 L6.6 8.07 L6.6 9.02 L0 5.62 Z" fill="#e9f0f8"/><path d="M0 8.24 L6.6 11.64 L6.6 12.59 L0 9.19 Z" fill="#e9f0f8"/><path d="M0 11.81 L6.6 15.21 L6.6 16.16 L0 12.76 Z" fill="#e9f0f8"/></g></svg>
<div class="row" style="left:122px;top:261px;letter-spacing:-0.104px;">Rearview mirror_housing</div>
<svg class="abs" style="left:60.5px;top:285.5px" width="14" height="11" viewBox="0 0 14 11"><circle cx="7.8" cy="5.5" r="4.6" fill="none" stroke="#1f4e82" stroke-width="1.9"/>
<circle cx="7.8" cy="5.5" r="1.9" fill="none" stroke="#1f4e82" stroke-width="1.5"/>
<path d="M0.2 5.5 L3.2 4.3 V6.7 Z" fill="#1f4e82"/><rect x="8.2" y="4.7" width="5.6" height="1.6" fill="#1f4e82"/></svg>
<div class="row" style="left:82px;top:281px;letter-spacing:-0.425px;font-weight:bold;">Connections</div>
</div>
<div id="vtb"><svg class="abs" style="left:0;top:0" width="67" height="706" viewBox="336 59 67 706">
<defs>
<pattern id="vF" width="4.2" height="4.2" patternUnits="userSpaceOnUse" patternTransform="rotate(-62)"><rect width="4.2" height="4.2" fill="#4474a6"/><rect width="4.2" height="1.1" fill="#b9cde2"/></pattern>
<pattern id="vG" width="4.6" height="4.6" patternUnits="userSpaceOnUse" patternTransform="rotate(-62)"><rect width="4.6" height="4.6" fill="#3d6ea0"/><rect width="4.6" height="1.0" fill="#f0f0f0"/></pattern>
<pattern id="vH" width="4.6" height="4.6" patternUnits="userSpaceOnUse" patternTransform="rotate(27)"><rect width="4.6" height="4.6" fill="#3d6ea0"/><rect width="4.6" height="1.0" fill="#f0f0f0"/></pattern>
<pattern id="vI" width="2.2" height="2.2" patternUnits="userSpaceOnUse" patternTransform="rotate(27)"><rect width="2.2" height="2.2" fill="#3d6ea0"/><rect width="2.2" height="0.8" fill="#c4d4e6"/></pattern>
<pattern id="vJ" width="4.4" height="4.4" patternUnits="userSpaceOnUse" patternTransform="rotate(-25)"><rect width="4.4" height="4.4" fill="#4a78aa"/><rect width="4.4" height="1.0" fill="#e4ebf3"/></pattern>
<pattern id="vK" width="4.4" height="4.4" patternUnits="userSpaceOnUse" patternTransform="rotate(-62)"><rect width="4.4" height="4.4" fill="#6089b6"/><rect width="4.4" height="1.3" fill="#c9d8e8"/></pattern>
</defs>
<path d="M361.2 83.3 H367" stroke="#1c4a80" stroke-width="1"/><path d="M368.4 83.3 L365.6 81.39999999999999 V85.2 Z" fill="#1c4a80"/><path d="M382 83.3 H376.4" stroke="#1c4a80" stroke-width="1"/><path d="M375 83.3 L377.8 81.39999999999999 V85.2 Z" fill="#1c4a80"/><rect x="368.7" y="82.8" width="1.2" height="12.9" fill="#1c4a80"/><rect x="372.9" y="82.8" width="1.2" height="12.9" fill="#1c4a80"/><rect x="360.1" y="87.3" width="8.6" height="8.4" fill="url(#vF)"/><rect x="374.1" y="87.3" width="8.2" height="8.4" fill="url(#vF)"/><path d="M380.6 75.4 A3.4 3.4 0 1 0 380.9 78.6" fill="none" stroke="#1c4a80" stroke-width="1.3"/><path d="M381.8 73.2 V77 H378 Z" fill="#1c4a80"/>
<path d="M361.2 113.6 H367" stroke="#1c4a80" stroke-width="1"/><path d="M368.4 113.6 L365.6 111.69999999999999 V115.5 Z" fill="#1c4a80"/><path d="M382 113.6 H376.4" stroke="#1c4a80" stroke-width="1"/><path d="M375 113.6 L377.8 111.69999999999999 V115.5 Z" fill="#1c4a80"/><rect x="368.7" y="113.1" width="1.2" height="12.9" fill="#1c4a80"/><rect x="372.9" y="113.1" width="1.2" height="12.9" fill="#1c4a80"/><rect x="360.1" y="117.6" width="8.6" height="8.4" fill="url(#vF)"/><rect x="374.1" y="117.6" width="8.2" height="8.4" fill="url(#vF)"/><path d="M374.2 107.5 H381.8 M378 103.7 V111.3" stroke="#1c4a80" stroke-width="1.4"/>
<rect x="359" y="145.2" width="24" height="9.5" rx="1.2" fill="url(#vG)"/><rect x="365.2" y="144.4" width="11.4" height="5" fill="#f0f0f0"/><rect x="365.9" y="145" width="10" height="3.7" fill="#0a2d6e"/>
<rect x="367.1" y="162.9" width="8.9" height="14.8" fill="url(#vH)"/><rect x="359" y="178.2" width="24" height="7.8" fill="url(#vG)"/><path d="M360.7 175.8 H365 V171.7 Z" fill="#0a2d6e"/><path d="M378 171.7 V175.8 H382.3 Z" fill="#0a2d6e"/>
<rect x="359" y="197.2" width="24" height="4.6" rx="1.6" fill="url(#vG)"/><rect x="365.9" y="204" width="10" height="2" fill="#0a2d6e"/><rect x="359" y="208" width="24" height="4.8" rx="1.6" fill="url(#vG)"/>
<path d="M366.4 223.4 L373.2 234.2 L368.2 240.6 L362.6 229.8 Z" fill="url(#vK)"/><path d="M361.2 230.8 L366.8 240.6 L363.4 246.2 L357.4 235.4 Z" fill="url(#vK)"/>
<path d="M373 226.2 L368.6 230.4" stroke="#1c4a80" stroke-width="2"/><path d="M366.6 232.2 V227.6 L371.2 232.2 Z" fill="#1c4a80"/>
<path d="M357.4 242.2 L361.6 238.4" stroke="#1c4a80" stroke-width="2"/><path d="M363.6 236.6 V241.2 L359 236.6 Z" fill="#1c4a80"/>
<path d="M382.8 233.2 H390 L386.4 237 Z" fill="#111"/>
<path d="M362.2 287.4 Q360.4 287.4 360.4 289.4 V292.6 Q360.4 294.4 359.2 294.4 Q360.4 294.4 360.4 296.2 V299.6 Q360.4 301.6 362.2 301.6" fill="none" stroke="#1c4a80" stroke-width="1"/>
<path d="M379.2 287.4 Q381 287.4 381 289.4 V292.6 Q381 294.4 382.2 294.4 Q381 294.4 381 296.2 V299.6 Q381 301.6 379.2 301.6" fill="none" stroke="#1c4a80" stroke-width="1"/>
<rect x="362.6" y="289" width="4.4" height="11.2" rx="0.8" fill="url(#vI)"/>
<rect x="368.6" y="289" width="4.4" height="11.2" rx="0.8" fill="url(#vI)"/>
<rect x="374.4" y="289" width="4.4" height="11.2" rx="0.8" fill="url(#vI)"/>
<rect x="362.2" y="318.2" width="1.5" height="1.4" fill="#1c4a80"/><rect x="365.2" y="318.2" width="1.5" height="1.4" fill="#1c4a80"/><rect x="368.2" y="318.2" width="1.5" height="1.4" fill="#1c4a80"/><rect x="371.2" y="318.2" width="1.5" height="1.4" fill="#1c4a80"/><rect x="374.2" y="318.2" width="1.5" height="1.4" fill="#1c4a80"/><rect x="377.2" y="318.2" width="1.5" height="1.4" fill="#1c4a80"/><rect x="380.2" y="318.2" width="1.5" height="1.4" fill="#1c4a80"/>
<rect x="360.2" y="321.2" width="1.5" height="1.4" fill="#1c4a80"/><rect x="363.2" y="321.2" width="1.5" height="1.4" fill="#1c4a80"/><rect x="366.2" y="321.2" width="1.5" height="1.4" fill="#1c4a80"/><rect x="369.2" y="321.2" width="1.5" height="1.4" fill="#1c4a80"/><rect x="372.2" y="321.2" width="1.5" height="1.4" fill="#1c4a80"/><rect x="375.2" y="321.2" width="1.5" height="1.4" fill="#1c4a80"/><rect x="378.2" y="321.2" width="1.5" height="1.4" fill="#1c4a80"/><rect x="381.2" y="321.2" width="1.5" height="1.4" fill="#1c4a80"/>
<path d="M368.9 324.2 L374.59999999999997 329.8 L380.29999999999995 324.2 V328.59999999999997 L374.59999999999997 335.0 L368.9 328.59999999999997 Z" fill="#1c4a80"/>
<rect x="363.3" y="344.4" width="9.8" height="22" fill="url(#vJ)"/>
<rect x="361.2" y="345.4" width="1.5" height="1.4" fill="#1c4a80"/><rect x="364.2" y="345.4" width="1.5" height="1.4" fill="#1c4a80"/><rect x="367.2" y="345.4" width="1.5" height="1.4" fill="#1c4a80"/><rect x="370.2" y="345.4" width="1.5" height="1.4" fill="#1c4a80"/><rect x="373.2" y="345.4" width="1.5" height="1.4" fill="#1c4a80"/><rect x="376.2" y="345.4" width="1.5" height="1.4" fill="#1c4a80"/><rect x="379.2" y="345.4" width="1.5" height="1.4" fill="#1c4a80"/><rect x="382.2" y="345.4" width="1.5" height="1.4" fill="#1c4a80"/>
<rect x="359.2" y="349.2" width="1.5" height="1.4" fill="#1c4a80"/><rect x="362.2" y="349.2" width="1.5" height="1.4" fill="#1c4a80"/><rect x="365.2" y="349.2" width="1.5" height="1.4" fill="#1c4a80"/><rect x="368.2" y="349.2" width="1.5" height="1.4" fill="#1c4a80"/><rect x="371.2" y="349.2" width="1.5" height="1.4" fill="#1c4a80"/><rect x="374.2" y="349.2" width="1.5" height="1.4" fill="#1c4a80"/><rect x="377.2" y="349.2" width="1.5" height="1.4" fill="#1c4a80"/><rect x="380.2" y="349.2" width="1.5" height="1.4" fill="#1c4a80"/>
<path d="M367.9 355 L374.6 361.4 L381.3 355 V361 L374.6 367.4 L367.9 361 Z" fill="#f0f0f0"/>
<path d="M368.9 355 L374.59999999999997 360.6 L380.29999999999995 355 V359.4 L374.59999999999997 365.8 L368.9 359.4 Z" fill="#1c4a80"/>
</svg></div>
<div id="view">
<svg width="945" height="697" viewBox="403 68 945 697" style="position:absolute;left:0;top:0">
<defs>
<linearGradient id="rod1" gradientUnits="userSpaceOnUse" x1="0" y1="-4" x2="0" y2="4"><stop offset="0" stop-color="#a2b692"/><stop offset="0.3" stop-color="#a6ba98"/><stop offset="0.65" stop-color="#9caa86"/><stop offset="1" stop-color="#8e9870"/></linearGradient>
<linearGradient id="rod2" gradientUnits="userSpaceOnUse" x1="0" y1="-4" x2="0" y2="4"><stop offset="0" stop-color="#c9b568"/><stop offset="0.3" stop-color="#d2be6e"/><stop offset="0.7" stop-color="#bfac64"/><stop offset="1" stop-color="#ab9c60"/></linearGradient>
<radialGradient id="ball" cx="0.66" cy="0.32" r="0.7"><stop offset="0" stop-color="#a99149"/><stop offset="0.12" stop-color="#937d33"/><stop offset="0.6" stop-color="#88732b"/><stop offset="1" stop-color="#836e28"/></radialGradient>
<linearGradient id="stem" gradientUnits="userSpaceOnUse" x1="969.5" y1="502.9" x2="1015.5" y2="518.9"><stop offset="0" stop-color="#a58b63"/><stop offset="0.40" stop-color="#9b8360"/><stop offset="0.50" stop-color="#c5a471"/><stop offset="0.58" stop-color="#9b8360"/><stop offset="1" stop-color="#a38962"/></linearGradient>
<linearGradient id="bmid" gradientUnits="userSpaceOnUse" x1="0" y1="412" x2="0" y2="458"><stop offset="0" stop-color="#a5c8ea"/><stop offset="0.45" stop-color="#9cb5cf"/><stop offset="0.75" stop-color="#a0bcd8"/><stop offset="1" stop-color="#a9d2f3"/></linearGradient>
<linearGradient id="bdark" gradientUnits="userSpaceOnUse" x1="0" y1="0" x2="0" y2="1" gradientTransform="translate(0,395) scale(1,30)"><stop offset="0" stop-color="#73a2d2"/><stop offset="1" stop-color="#6387ae"/></linearGradient>
<linearGradient id="bdark2" gradientUnits="userSpaceOnUse" x1="1040" y1="420" x2="1030" y2="458"><stop offset="0" stop-color="#74a3d3"/><stop offset="0.6" stop-color="#6a94bf"/><stop offset="1" stop-color="#6285ab"/></linearGradient>
<linearGradient id="btop" gradientUnits="userSpaceOnUse" x1="960" y1="0" x2="1092" y2="0"><stop offset="0" stop-color="#a3c6e6"/><stop offset="0.3" stop-color="#a8d1f2"/><stop offset="0.7" stop-color="#a6d2f5"/><stop offset="1" stop-color="#a3c8ea"/></linearGradient>
<clipPath id="faceclip"><path d="M627.0 393.4 C629.2 392.4 631.6 391.8 634.0 391.4 C637.6 390.9 641.3 390.7 645.0 390.7 C648.3 390.7 651.7 390.9 655.0 391.3 C658.9 391.8 662.8 392.8 666.7 393.5 C687.8 397.3 709.0 400.6 730.0 404.8 C793.4 417.3 857.0 429.0 920.0 443.6 C980.4 457.6 1040.1 474.2 1100.0 490.4 C1130.8 498.7 1161.3 508.2 1192.0 517.0 C1210.6 522.3 1229.4 527.2 1248.0 532.8 C1256.0 535.2 1263.8 538.0 1271.5 541.2 C1276.9 543.4 1282.2 545.9 1287.2 549.0 C1290.7 551.1 1293.9 553.7 1296.6 556.8 C1299.2 559.8 1301.3 563.3 1302.9 567.0 C1305.0 572.0 1306.2 577.4 1307.6 582.7 C1309.3 588.9 1310.9 595.2 1312.3 601.5 C1313.7 607.7 1315.0 614.0 1316.2 620.3 C1317.5 626.9 1318.4 633.5 1319.8 640.0 C1321.0 645.3 1322.9 650.4 1324.0 655.7 C1325.1 660.8 1325.7 666.1 1326.4 671.3 C1327.1 676.5 1327.6 681.8 1328.0 687.0 C1328.4 692.2 1328.7 697.5 1328.7 702.7 C1328.7 707.9 1328.7 713.2 1328.0 718.4 C1327.4 723.2 1326.6 728.0 1324.8 732.5 C1323.4 736.0 1321.4 739.4 1318.5 741.9 C1315.4 744.6 1311.5 746.3 1307.6 747.4 C1303.5 748.5 1299.2 748.4 1295.0 748.2 C1287.1 747.9 1279.3 746.7 1271.5 745.8 C1263.6 744.9 1255.8 743.6 1248.0 742.6 C1227.1 739.8 1206.2 737.3 1185.4 734.4 C1165.6 731.6 1145.7 729.0 1126.0 725.5 C1106.1 722.0 1086.4 717.8 1066.7 713.6 C1046.8 709.4 1027.0 704.9 1007.3 700.2 C987.5 695.5 967.8 690.1 948.0 685.4 C924.3 679.7 900.4 674.7 876.7 669.0 C856.9 664.3 837.0 659.6 817.4 654.2 C797.5 648.7 777.7 642.6 758.0 636.4 C738.2 630.2 718.4 623.8 698.7 617.2 C678.8 610.5 659.2 603.0 639.3 596.4 C624.7 591.6 609.9 587.6 595.3 582.8 C588.3 580.5 581.3 578.2 574.5 575.3 C569.8 573.3 565.1 571.0 561.0 568.0 C557.6 565.5 554.7 562.4 552.3 559.0 C550.0 555.8 548.1 552.3 547.0 548.6 C545.9 544.8 545.7 540.7 546.0 536.8 C546.4 531.8 547.7 526.8 549.3 522.0 C551.2 516.3 554.3 511.1 556.7 505.6 C559.7 498.7 562.5 491.7 565.6 484.8 C567.9 479.8 570.5 474.9 573.0 470.0 C574.9 466.3 576.9 462.6 579.0 459.0 C582.4 453.0 585.7 447.0 589.3 441.2 C593.0 435.2 597.1 429.3 601.0 423.4 C605.0 417.4 608.8 411.4 613.0 405.6 C614.9 403.0 617.0 400.4 619.5 398.2 C621.7 396.2 624.3 394.7 627.0 393.4 Z"/></clipPath>
<linearGradient id="teal" gradientUnits="userSpaceOnUse" x1="982" y1="0" x2="1032" y2="0"><stop offset="0" stop-color="#74cdb4"/><stop offset="0.5" stop-color="#62c2b4"/><stop offset="0.62" stop-color="#b4ecdc"/><stop offset="0.72" stop-color="#76ccc0"/><stop offset="1" stop-color="#86d4c0"/></linearGradient>
<linearGradient id="bhl" gradientUnits="userSpaceOnUse" x1="1051.6" y1="410" x2="1061.2" y2="413.6"><stop offset="0" stop-color="#d6f0ff" stop-opacity="0"/><stop offset="0.45" stop-color="#e2f6ff" stop-opacity="0.95"/><stop offset="0.6" stop-color="#e2f6ff" stop-opacity="0.95"/><stop offset="1" stop-color="#d6f0ff" stop-opacity="0"/></linearGradient>
</defs>
<!-- green backing -->
<path d="M627.4 392.6 C629.3 391.3 631.0 389.7 633.0 388.6 C635.0 387.5 637.1 386.6 639.3 386.0 C641.1 385.5 643.1 385.2 645.0 385.1 C651.3 384.9 657.7 384.6 664.0 385.1 C669.4 385.5 674.7 386.7 680.0 387.6 C696.7 390.3 713.4 392.5 730.0 395.8 C793.4 408.3 856.9 420.7 920.0 435.0 C980.3 448.7 1040.2 464.2 1100.0 480.0 C1130.9 488.1 1161.4 497.5 1192.0 506.7 C1210.8 512.3 1229.4 518.4 1248.0 524.4 C1258.5 527.8 1268.9 531.2 1279.3 534.9 C1284.1 536.6 1289.1 537.9 1293.5 540.4 C1296.5 542.1 1299.0 544.8 1301.3 547.4 C1304.0 550.5 1306.4 553.9 1308.3 557.6 C1310.6 562.1 1312.3 566.9 1313.8 571.7 C1315.7 577.9 1317.0 584.2 1318.5 590.5 C1320.1 597.3 1321.8 604.1 1323.2 610.9 C1324.9 619.2 1326.4 627.6 1327.9 636.0 C1329.5 645.2 1331.4 654.3 1332.6 663.5 C1333.6 671.3 1334.0 679.2 1334.5 687.0 C1334.9 693.3 1335.6 699.5 1335.5 705.8 C1335.5 710.0 1335.1 714.3 1334.2 718.4 C1333.4 722.2 1332.2 725.9 1330.3 729.3 C1329.0 731.7 1326.9 733.8 1324.8 735.6 C1320.8 739.0 1316.3 741.9 1312.0 745.0 L1290 740 L1290 560 L700 410 L640 400 Z" fill="#a6efc6"/>
<path d="M664.4 388.8 L667 386 L669.4 389.4 Z" fill="#72cc9c"/><!-- bump -->
<!-- peach layer -->
<path d="M630.0 392.0 C632.0 391.1 633.9 389.9 636.0 389.4 C639.9 388.6 644.0 388.2 648.0 388.2 C653.3 388.2 658.7 388.6 664.0 389.2 C669.4 389.8 674.7 390.9 680.0 391.8 C696.7 394.7 713.4 397.3 730.0 400.6 C793.4 413.3 857.0 425.2 920.0 439.9 C980.4 454.0 1040.1 470.5 1100.0 486.7 C1130.8 495.0 1161.3 504.5 1192.0 513.3 C1210.6 518.6 1229.5 523.3 1248.0 528.9 C1256.4 531.4 1264.7 534.4 1272.8 537.8 C1278.4 540.1 1283.9 542.7 1289.0 546.0 C1292.8 548.5 1296.4 551.5 1299.4 555.0 C1302.1 558.2 1304.3 561.9 1306.0 565.8 C1308.2 570.9 1309.3 576.4 1310.8 581.8 C1312.5 588.1 1314.1 594.4 1315.5 600.8 C1316.9 607.1 1318.2 613.5 1319.4 619.8 C1320.7 626.5 1321.6 633.2 1323.0 639.8 C1324.2 645.1 1326.1 650.3 1327.2 655.6 C1328.3 660.7 1328.9 666.0 1329.6 671.2 C1330.3 676.5 1330.8 681.7 1331.2 687.0 C1331.6 692.2 1331.9 697.5 1331.9 702.7 C1331.9 707.9 1331.9 713.2 1331.2 718.4 C1330.5 723.1 1329.7 727.8 1327.8 732.2 C1326.7 734.9 1324.7 737.3 1322.4 739.0 C1318.7 741.7 1314.1 743.0 1310.0 745.0 L1200 700 L640 420 Z" fill="#fdd6a0" stroke="#4aa57e" stroke-width="1.5" paint-order="stroke"/>
<!-- brown face -->
<path d="M627.0 393.4 C629.2 392.4 631.6 391.8 634.0 391.4 C637.6 390.9 641.3 390.7 645.0 390.7 C648.3 390.7 651.7 390.9 655.0 391.3 C658.9 391.8 662.8 392.8 666.7 393.5 C687.8 397.3 709.0 400.6 730.0 404.8 C793.4 417.3 857.0 429.0 920.0 443.6 C980.4 457.6 1040.1 474.2 1100.0 490.4 C1130.8 498.7 1161.3 508.2 1192.0 517.0 C1210.6 522.3 1229.4 527.2 1248.0 532.8 C1256.0 535.2 1263.8 538.0 1271.5 541.2 C1276.9 543.4 1282.2 545.9 1287.2 549.0 C1290.7 551.1 1293.9 553.7 1296.6 556.8 C1299.2 559.8 1301.3 563.3 1302.9 567.0 C1305.0 572.0 1306.2 577.4 1307.6 582.7 C1309.3 588.9 1310.9 595.2 1312.3 601.5 C1313.7 607.7 1315.0 614.0 1316.2 620.3 C1317.5 626.9 1318.4 633.5 1319.8 640.0 C1321.0 645.3 1322.9 650.4 1324.0 655.7 C1325.1 660.8 1325.7 666.1 1326.4 671.3 C1327.1 676.5 1327.6 681.8 1328.0 687.0 C1328.4 692.2 1328.7 697.5 1328.7 702.7 C1328.7 707.9 1328.7 713.2 1328.0 718.4 C1327.4 723.2 1326.6 728.0 1324.8 732.5 C1323.4 736.0 1321.4 739.4 1318.5 741.9 C1315.4 744.6 1311.5 746.3 1307.6 747.4 C1303.5 748.5 1299.2 748.4 1295.0 748.2 C1287.1 747.9 1279.3 746.7 1271.5 745.8 C1263.6 744.9 1255.8 743.6 1248.0 742.6 C1227.1 739.8 1206.2 737.3 1185.4 734.4 C1165.6 731.6 1145.7 729.0 1126.0 725.5 C1106.1 722.0 1086.4 717.8 1066.7 713.6 C1046.8 709.4 1027.0 704.9 1007.3 700.2 C987.5 695.5 967.8 690.1 948.0 685.4 C924.3 679.7 900.4 674.7 876.7 669.0 C856.9 664.3 837.0 659.6 817.4 654.2 C797.5 648.7 777.7 642.6 758.0 636.4 C738.2 630.2 718.4 623.8 698.7 617.2 C678.8 610.5 659.2 603.0 639.3 596.4 C624.7 591.6 609.9 587.6 595.3 582.8 C588.3 580.5 581.3 578.2 574.5 575.3 C569.8 573.3 565.1 571.0 561.0 568.0 C557.6 565.5 554.7 562.4 552.3 559.0 C550.0 555.8 548.1 552.3 547.0 548.6 C545.9 544.8 545.7 540.7 546.0 536.8 C546.4 531.8 547.7 526.8 549.3 522.0 C551.2 516.3 554.3 511.1 556.7 505.6 C559.7 498.7 562.5 491.7 565.6 484.8 C567.9 479.8 570.5 474.9 573.0 470.0 C574.9 466.3 576.9 462.6 579.0 459.0 C582.4 453.0 585.7 447.0 589.3 441.2 C593.0 435.2 597.1 429.3 601.0 423.4 C605.0 417.4 608.8 411.4 613.0 405.6 C614.9 403.0 617.0 400.4 619.5 398.2 C621.7 396.2 624.3 394.7 627.0 393.4 Z" fill="#ba9060"/>
<!-- stem over green / peach -->
<path d="M983 449 L1033 460.6 L1030.5 466 L980.8 454.4 Z" fill="url(#teal)"/>
<path d="M980.8 454.4 L1030.5 466 L1029.4 468.6 L979.8 457 Z" fill="#d9bc93"/>
<!-- stem inside mirror -->
<g clip-path="url(#faceclip)"><path d="M984 452 L1033.5 464 L988 561.4 L951 544 Z" fill="#9a8161"/><path d="M1013.4 458 L981.6 540" stroke="#d2a566" stroke-width="2.2" opacity="0.85"/><path d="M1013.4 458 L981.6 540" stroke="#b8955f" stroke-width="5" opacity="0.35"/></g>
<!-- rods -->
<g transform="translate(693,430.4) rotate(13.48)"><path d="M0 -3.5 L546.2 -3.9 L546.2 3.9 L0 3.5 Q-1.8 0 0 -3.5 Z" fill="url(#rod1)"/></g>
<g transform="translate(600.5,526.3) rotate(13.51)"><path d="M0 -3.5 L701 -4 L701 4 L0 3.5 Q-1.8 0 0 -3.5 Z" fill="url(#rod2)"/></g>
<!-- ball -->
<circle cx="961.8" cy="555" r="24" fill="#967b3b"/>
<circle cx="962.4" cy="554.6" r="21.4" fill="#7d6824"/>
<circle cx="963" cy="554" r="20" fill="url(#ball)"/>
<!-- bracket -->
<path d="M966.7 381.9 L1053.5 401.9 Q1067 405 1075.8 410 Q1083 414 1087.7 420.4 L1092 427.9 L1089 436.8 L1083 453 Q1080 458 1075.8 459.8 Q1071 461.5 1065.4 461.2 Q1059 460 1053.5 457.5 L1046 453 L1037 456 L1033 460.6 L983 449 L983.8 439.7 L975 433.8 L964.5 426.4 Q959 421 957.8 416 Q956 409 957 404 L963 392.3 Z" fill="url(#btop)"/>
<path d="M1055.2 400.8 L1064.8 404.4 L1057.6 422.8 L1048 419.2 Z" fill="url(#bhl)"/>
<path d="M970.4 424.2 L983.8 423.4 L983.8 411 L1003 413.5 L1022.4 418 L1017.2 430.8 L1029.8 435.3 L1049 447.2 L1038.7 444.2 L1029.8 448.6 L1015 449.4 L1012.7 454.6 L1018 457 L983 449 L983.8 439.7 L975 433.8 Z" fill="url(#bmid)"/>
<path d="M960 398.2 Q964 394.6 969 393.7 L976.4 395.2 L986.8 404.1 L983.8 413 L983.8 423.4 L970.4 424.2 Q965 423 962 419.4 Q959 416 958.6 411 Q958.4 403 960 398.2 Z" fill="url(#bdark)"/>
<path d="M1022.4 416 L1068.4 426.4 L1084 442.7 L1081.7 453 Q1079 457 1074.3 458.3 Q1068 459.2 1062.4 457.5 L1053.5 451.6 Q1049 444.8 1042 441.6 L1017.2 430.8 Z" fill="url(#bdark2)"/>
<path d="M1015 449.4 L1026.8 450.9 Q1029.6 446.4 1034.2 444.9 L1047.6 445.7 L1049 448.6 Q1042 449.4 1038.7 453 L1032.8 460.5 L1012.7 455.3 Z" fill="#6c98c4"/>

</svg>
</div>
</div></body></html>
